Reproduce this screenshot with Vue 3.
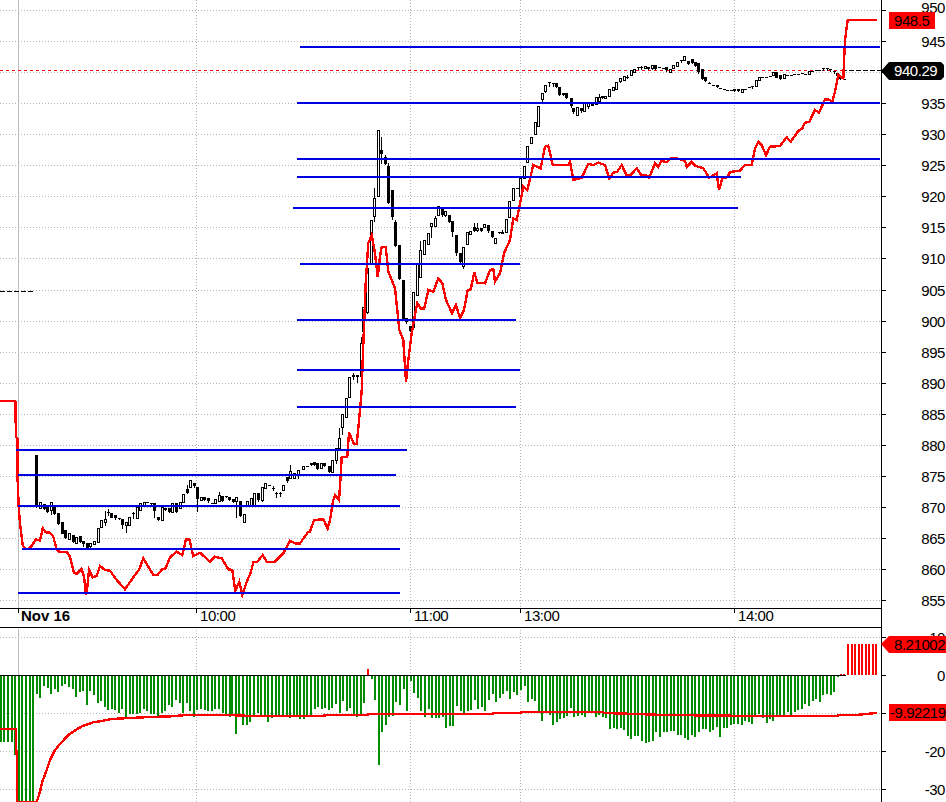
<script setup>
// points below were read off the chart in zoomed pixels, each block has its own origin
const toReal = (ox, oy, pts) => pts.map(([x, y]) => [ox + x / 3, oy + y / 3])

function parseCandles(ox, oy, str) {
  return str.split(',').map((row) => {
    const [x, kind, top, bot, wt, wb] = row.trim().split(' ')
    const t = oy + Number(top) / 3
    const b = oy + Number(bot) / 3
    return {
      x: Math.round(ox + Number(x) / 3),
      filled: kind !== 'w',
      top: Math.round(t),
      h: Math.max(1, Math.round(b - t)),
      wt: Math.round(oy + Number(wt ?? top) / 3),
      wb: Math.round(oy + Number(wb ?? bot) / 3)
    }
  })
}

const candles = [
  ...parseCandles(0, 380, `109 b 225 380, 120 w 367 385, 131 b 372 388, 142 b 380 395, 152 w 367 390 367 403, 163 b 378 403,
    174 b 400 432, 185 b 425 460, 196 b 450 475, 207 w 460 478, 218 b 465 485, 228 w 470 488, 239 b 468 485,
    250 b 482 490 482 497, 261 b 488 502, 271 w 490 500, 282 w 482 492, 293 w 443 485, 304 w 420 440,
    315 w 418 428 392 435, 323 b 395 398 388 405, 334 b 398 412, 345 b 406 416, 356 b 415 418, 367 b 416 435 416 445,
    378 w 425 435 425 455, 388 w 412 435, 399 d 398 400 395 415, 410 w 382 415, 420 w 368 390, 431 w 365 375,
    442 d 367 367, 452 b 368 372, 463 b 370 395 370 410, 474 b 410 420, 485 w 380 418, 496 b 383 390, 507 b 385 397,
    517 w 370 397, 528 b 368 396, 539 w 367 385, 549 w 343 367, 560 b 328 340 315 340, 570 w 300 320, 581 b 310 320,
    592 b 320 355 320 392, 603 w 350 360, 613 b 350 360, 624 b 355 365, 635 d 368 368, 645 w 358 370,
    656 w 345 362 335 362, 667 b 348 362, 678 b 348 352, 688 b 350 360, 699 b 356 366, 709 w 350 362 350 412,
    720 b 362 408, 731 w 402 425, 742 w 362 378, 752 w 355 375, 763 w 340 375, 774 b 340 362, 785 w 322 362,
    796 w 310 325, 807 d 315 315, 818 b 325 327 318 330, 829 b 340 342 335 350, 839 d 340 340 335 348, 850 w 316 330,
    860 b 292 305, 871 w 272 292 255 292, 882 w 278 292, 895 w 270 285 270 295, 910 w 258 268, 921 d 257 257,
    932 w 250 254, 943 b 245 255`),
  ...parseCandles(280, 360, `112 b 308 326, 124 w 308 322, 133 b 310 318, 146 b 318 335, 155 w 300 337,
    167 w 265 302 265 308, 178 w 235 266 205 266, 187 w 162 200 162 222, 199 w 115 172, 208 w 52 112`),
  ...parseCandles(320, 120, `100 b 765 772 760 778, 110 b 765 772 765 785, 122 w 670 770 652 770, 130 w 562 635, 142 w 445 578,
    154 w 300 428, 163 w 235 290 205 302, 175 w 30 228, 184 b 90 102 50 130, 196 b 112 132 105 132, 205 b 138 248 130 248,
    217 b 210 290 210 298, 226 b 305 378 300 378, 238 b 375 476, 250 b 480 597, 259 b 595 608, 271 b 618 632,
    280 w 515 620, 292 w 432 524, 301 w 390 470 362 470, 313 w 360 402, 325 w 340 372, 334 w 310 320 310 352,
    346 w 295 318 288 318, 355 w 258 285, 367 b 268 287, 376 w 274 287, 388 b 285 305, 397 b 303 335 303 347,
    409 b 345 400 345 405, 421 b 400 428, 430 w 382 438 382 443, 442 w 335 370, 451 w 333 341, 463 b 322 333 310 333,
    472 w 325 332 308 332, 484 b 324 332, 493 w 312 320, 505 b 316 335, 517 b 333 352, 526 w 355 370, 537 b 336 340,
    547 b 335 340 330 340, 559 w 298 337, 568 w 243 290, 580 w 203 238, 590 d 205 205`),
  ...parseCandles(520, 0, `0 w 535 590, 13 w 498 535, 22 w 438 485, 33 w 412 430, 44 w 367 403, 55 w 318 377, 65 w 280 298 280 303,
    76 w 256 275, 87 d 245 245 245 258, 98 d 250 250 250 258, 109 b 250 262, 118 b 262 285, 129 b 279 285, 139 b 280 295,
    152 b 295 320, 160 b 325 338, 172 w 320 344, 183 b 325 335, 193 w 310 333, 205 w 305 316 305 323, 215 b 305 316,
    227 w 292 312, 236 w 292 303 283 303, 247 b 288 294, 256 w 288 295, 268 w 267 288, 279 w 260 270, 289 w 247 268,
    300 w 235 245, 311 w 228 240, 322 d 230 230 226 234, 332 w 211 225, 343 w 208 217, 353 d 201 201 201 208, 364 d 202 202 198 206,
    376 w 197 204, 385 b 200 207, 396 w 196 206, 406 b 196 207, 417 d 202 202, 428 d 204 204, 439 b 202 212, 451 w 206 215,
    460 w 195 205, 472 w 186 198, 482 b 181 185, 493 w 169 181, 504 b 184 192, 515 b 178 190, 525 b 186 197, 535 b 190 218,
    546 b 208 238, 556 b 232 244, 568 d 250 250 245 250, 579 d 254 254, 590 b 256 262, 600 d 263 263, 612 d 267 267, 622 d 269 269,
    633 d 270 270, 643 b 267 272, 655 b 268 274, 665 w 268 276, 676 d 266 266, 688 d 262 262, 697 b 259 263, 707 w 240 257,
    716 w 232 241, 727 d 232 232, 738 d 231 231, 749 d 228 228, 760 w 215 225, 769 b 215 232, 780 b 225 236, 791 w 222 235,
    800 d 226 226, 812 d 224 224, 822 d 223 223, 833 d 222 222, 845 d 218 218, 855 d 222 222, 866 w 214 222, 875 d 213 213,
    887 d 211 211, 898 d 210 210, 910 b 205 209, 920 b 205 209, 931 d 208 208 208 212, 942 d 214 214 214 220, 952 b 220 228,
    960 b 232 237, 971 d 236 236`)
]

// main red line
const line = [
  ...toReal(0, 380, [[0,62],[46,62],[48,170],[52,175],[52,275],[56,380],[60,430],[65,470],[68,495],[75,507],[85,507],[95,497],[108,478],[120,482],[128,445],[137,457],[150,458],[160,470],[170,510],[180,517],[200,516],[210,530],[222,578],[230,582],[245,567],[252,590],[258,645],[262,620],[267,570],[278,592],[290,588],[300,558],[315,570],[330,572],[350,600],[375,628],[400,592],[418,568],[430,535],[445,560],[460,584],[473,584],[487,567],[497,565],[510,532],[530,515],[547,525],[558,478],[568,478],[580,528],[600,518],[630,545],[645,530],[665,535],[685,568],[697,570],[706,632],[718,605],[727,645],[740,605],[752,578],[760,547],[772,545],[788,525],[800,545],[825,545],[850,520],[870,483],[885,490],[900,490],[925,455],[930,455],[942,420]]),
  ...toReal(280, 360, [[103,480],[130,478],[143,505],[150,480],[160,420],[165,405],[177,420],[180,380],[185,290],[202,290],[207,218],[217,240],[222,252],[230,252],[235,205],[240,150],[245,90],[248,0]]),
  ...toReal(320, 120, [[137,490],[145,370],[155,345],[165,400],[173,470],[180,410],[185,380],[197,380],[205,455],[225,505],[235,600],[238,630],[250,660],[258,785],[265,720],[275,640],[285,585],[292,550],[302,565],[313,565],[325,510],[340,515],[355,475],[367,490],[378,540],[396,580],[408,555],[420,595],[432,570],[443,510],[452,508],[463,457],[472,488],[495,490],[510,450],[520,447],[525,485],[540,460],[552,400],[570,360],[580,295],[590,300],[610,200],[622,210],[640,135],[662,145],[675,80],[685,77],[698,135]]),
  ...toReal(520, 0, [[145,495],[150,485],[160,540],[185,533],[205,492],[220,495],[235,488],[255,495],[268,535],[280,518],[292,515],[305,495],[320,527],[332,525],[350,505],[365,527],[378,525],[388,533],[405,490],[415,500],[425,482],[440,487],[452,476],[470,475],[495,482],[500,500],[515,485],[525,497],[550,505],[568,533],[590,520],[597,570],[607,535],[622,532],[630,516],[660,512],[675,495],[695,495],[705,445],[715,425],[725,435],[738,465],[750,440],[780,438],[800,412],[812,425],[835,393],[847,385],[855,368],[868,365],[885,330],[897,338],[915,298],[925,298],[937,305],[945,275],[955,225],[970,235],[975,120],[983,60],[1070,60]])
]
const linePoints = line.map(([x, y]) => `${x.toFixed(1)},${y.toFixed(1)}`).join(' ')

// moving average in the lower panel
const avg = [
  ...toReal(0, 600, [[0,386],[47,386],[47,425],[50,465],[52,606],[110,606],[120,575],[127,545],[140,510],[150,480],[165,450],[180,432],[205,405],[230,388],[250,377],[280,367],[300,364],[335,357],[390,354],[450,351],[515,349],[560,345],[680,345],[760,348],[960,348]]),
  ...toReal(320, 600, [[27,345],[143,345],[143,342],[252,342],[518,342],[520,339],[602,339],[603,336],[850,336],[852,339]]),
  ...toReal(626, 600, [[30,342],[115,345],[400,348],[635,348],[637,345],[690,345],[720,342],[752,339]])
]
const avgPoints = avg.map(([x, y]) => `${x.toFixed(1)},${y.toFixed(1)}`).join(' ')

// histogram, x:bottom in zoomed pixels
function parseBars(ox, str) {
  return str.trim().split(/\s+/).map((item) => {
    const [x, y] = item.split(':').map(Number)
    return { x: Math.round(ox + x / 3), y: Math.round(600 + y / 3) }
  })
}
const ZERO = 675
const bars = [
  ...parseBars(0, `2:425 13:425 24:425 35:425 46:465 57:606 67:606 78:606 89:606 100:606 110:282 121:293 132:258 143:263 153:282 164:268 175:275 186:258 196:252 207:262 218:266 228:291 239:275 250:272 261:315 271:272 282:285 293:308 304:303 315:320 325:330 336:328 346:330 357:338 367:328 378:350 389:342 399:342 410:342 420:338 431:326 442:332 452:342 463:342 474:352 485:338 496:332 507:316 517:320 528:300 539:308 549:338 560:308 571:332 582:352 592:330 603:326 614:330 625:332 635:333 646:328 657:328 668:340 678:345 689:350 697:342 707:402 717:345 728:375 740:375 751:365 762:350 773:338 784:350 795:352 805:365 816:355 827:345 838:350 849:345 860:345 870:355 881:350 892:345 900:358 912:356 922:350 932:350 945:326 955:320`),
  ...parseBars(320, `5:326 16:323 27:330 36:323 47:311 60:338 69:302 81:332 90:323 101:346 111:350 122:345 131:308 143:207 155:236 165:300 176:494 187:395 198:374 208:350 219:347 228:305 240:314 251:266 261:332 272:243 282:278 294:293 304:332 315:350 326:326 337:353 348:353 357:353 368:350 379:383 390:377 399:377 411:317 422:332 432:340 443:332 452:329 464:299 474:326 486:322 495:332 506:299 518:282 528:305 540:293 549:281 560:272 570:296 582:275 591:284 603:269 614:258 624:305 635:296 645:302 656:335 666:362 678:335 689:344 699:374 711:365 720:356 731:353 741:347 753:323 762:350 774:347 785:344 795:350 806:335 817:335 828:350 838:344 849:350 858:353 870:386 882:383 892:386 902:383 912:389 923:407 933:416 944:407 954:407`),
  ...parseBars(626, `48:422 60:428 70:425 81:422 91:395 102:410 113:395 123:395 134:392 145:392 156:404 165:404 176:413 186:419 197:404 207:410 218:395 230:386 239:386 251:395 262:389 272:380 282:410 293:383 303:383 314:374 325:371 336:371 347:374 358:362 368:365 378:371 388:345 398:341 410:353 422:368 432:356 442:362 452:345 463:350 474:347 485:335 496:347 506:335 517:329 527:326 538:311 549:317 560:302 570:296 582:305 592:284 603:281 614:284 624:275 635:232 645:222 655:222 666:133 677:133 688:133 698:133 709:133 720:133 730:133 741:133 751:133`)
].map((b) => ({
  x: b.x,
  y: Math.min(b.y, ZERO),
  h: Math.max(1, Math.abs(b.y - ZERO)),
  up: b.y < ZERO
}))

const levels = [
  { y: 47, x1: 300, x2: 880 },
  { y: 103, x1: 297, x2: 880 },
  { y: 159, x1: 297, x2: 880 },
  { y: 177, x1: 297, x2: 741 },
  { y: 208, x1: 293, x2: 738 },
  { y: 264, x1: 300, x2: 520 },
  { y: 320, x1: 297, x2: 516 },
  { y: 370, x1: 297, x2: 520 },
  { y: 407, x1: 297, x2: 516 },
  { y: 450, x1: 16, x2: 407 },
  { y: 475, x1: 18, x2: 396 },
  { y: 506, x1: 18, x2: 400 },
  { y: 549, x1: 22, x2: 400 },
  { y: 593, x1: 18, x2: 400 }
]

const priceTicks = []
for (let p = 855; p <= 950; p += 5) {
  priceTicks.push({ label: p, y: Math.round(600 - (p - 855) * 6.21) + 0.5 })
}
const lowerTicks = [
  { label: '10', y: 637.5 },
  { label: '0', y: 675.5 },
  { label: '-10', y: 713.5 },
  { label: '-20', y: 751.5 },
  { label: '-30', y: 789.5 }
]
const timeTicks = [
  { x: 196.5, label: '10:00' },
  { x: 410.5, label: '11:00' },
  { x: 520.5, label: '13:00' },
  { x: 734.5, label: '14:00' }
]

// these two sit fully under a value tag in the chart
const hiddenLabels = [940, '-10']
</script>

<template>
  <div class="chart">
    <svg width="946" height="802" viewBox="0 0 946 802">
      <!-- grid -->
      <g class="grid">
        <line v-for="t in priceTicks" :key="t.label" x1="0" x2="881" :y1="t.y" :y2="t.y" />
        <line v-for="t in lowerTicks.filter((l) => l.label !== '0')" :key="t.label" x1="0" x2="881" :y1="t.y" :y2="t.y" />
        <template v-for="t in timeTicks" :key="t.label">
          <line :x1="t.x" :x2="t.x" y1="0" y2="608" />
          <line :x1="t.x" :x2="t.x" y1="627" y2="802" />
        </template>
      </g>
      <line class="session" x1="18.5" x2="18.5" y1="0" y2="608" />
      <line class="session" x1="18.5" x2="18.5" y1="629" y2="802" />

      <!-- price panel -->
      <line class="prev-close" x1="0" x2="33" y1="291.5" y2="291.5" />
      <line class="last-red" x1="0" x2="842" y1="70.5" y2="70.5" />
      <line class="prev-close" x1="842" x2="881" y1="70.5" y2="70.5" />
      <g v-for="(c, i) in candles" :key="i" shape-rendering="crispEdges">
        <line class="wick" :x1="c.x + 0.5" :x2="c.x + 0.5" :y1="c.wt" :y2="c.wb + 1" />
        <rect v-if="c.filled" class="body-black" :x="c.x - 1" :y="c.top" width="3" :height="c.h" />
        <rect v-else class="body-white" :x="c.x - 0.5" :y="c.top + 0.5" width="2" :height="c.h" />
      </g>
      <polyline class="red-line" :points="linePoints" />
      <line v-for="l in levels" :key="l.y" class="level" :x1="l.x1" :x2="l.x2" :y1="l.y" :y2="l.y" />

      <!-- time strip -->
      <line class="frame" x1="0" x2="881" y1="608.5" y2="608.5" />
      <line class="frame" x1="0" x2="881" y1="627.5" y2="627.5" />
      <line class="frame" x1="18.5" x2="18.5" y1="608" y2="613" />
      <text class="label bold" x="21" y="621">Nov 16</text>
      <template v-for="t in timeTicks" :key="t.label">
        <line class="frame" :x1="t.x" :x2="t.x" y1="608" y2="613" />
        <text class="label" :x="t.x + 3.5" y="621">{{ t.label }}</text>
      </template>

      <!-- lower panel -->
      <g shape-rendering="crispEdges">
        <rect v-for="(b, i) in bars" :key="i" :class="b.up ? 'bar-up' : 'bar-down'" :x="b.x - 1" :y="b.y" width="2" :height="b.h" />
      </g>
      <line class="frame" x1="0" x2="846" y1="675.5" y2="675.5" />
      <polyline class="red-line" :points="avgPoints" />

      <!-- right axis -->
      <line class="frame" x1="881.5" x2="881.5" y1="0" y2="802" />
      <g v-for="t in priceTicks" :key="t.label">
        <line class="frame" x1="881" x2="886" :y1="t.y" :y2="t.y" />
        <text v-if="!hiddenLabels.includes(t.label)" class="label" x="945" :y="t.label === 950 ? 13 : t.y + 5" text-anchor="end">{{ t.label }}</text>
      </g>
      <g v-for="t in lowerTicks" :key="t.label">
        <line class="frame" x1="881" x2="886" :y1="t.y" :y2="t.y" />
        <text v-if="!hiddenLabels.includes(t.label)" class="label" x="945" :y="t.y + 5" text-anchor="end">{{ t.label }}</text>
      </g>

      <!-- value tags -->
      <rect class="tag-red" x="889" y="12" width="46" height="17" />
      <text class="label" x="894" y="26">948.5</text>
      <polygon class="tag-black" points="881,71 889,62 941,62 944,65 944,77 941,80 889,80" />
      <text class="label light" x="894" y="76">940.29</text>
      <polygon class="tag-red" points="881,644 889,636 946,636 946,653 889,653" />
      <text class="label" x="894" y="650">8.21002</text>
      <rect class="tag-red" x="889" y="704" width="57" height="17" />
      <text class="label" x="890" y="718">-9.92219</text>
    </svg>
  </div>
</template>

<style scoped>
.chart {
  width: 946px;
  height: 802px;
  overflow: hidden;
  background: #fff;
}

svg {
  display: block;
}

.grid line {
  stroke: #b4b4b4;
  stroke-width: 1;
  stroke-dasharray: 1 2;
  shape-rendering: crispEdges;
}

.session {
  stroke: #bdbdbd;
  stroke-width: 1;
  shape-rendering: crispEdges;
}

.frame {
  stroke: #000;
  stroke-width: 1;
  shape-rendering: crispEdges;
}

.prev-close {
  stroke: #000;
  stroke-dasharray: 5 2;
  shape-rendering: crispEdges;
}

.last-red {
  stroke: #f00;
  stroke-dasharray: 3 3;
  shape-rendering: crispEdges;
}

.wick {
  stroke: #000;
  stroke-width: 1;
}

.body-black {
  fill: #000;
}

.body-white {
  fill: #fff;
  stroke: #000;
  stroke-width: 1;
}

.red-line {
  fill: none;
  stroke: #f00;
  stroke-width: 2.4;
  shape-rendering: crispEdges;
}

.level {
  stroke: #0000e0;
  stroke-width: 2;
  shape-rendering: crispEdges;
}

.bar-down {
  fill: #008c00;
}

.bar-up {
  fill: #f00;
}

.label {
  font-family: "Liberation Sans", Arial, sans-serif;
  font-size: 15px;
  letter-spacing: -0.45px;
  fill: #000;
}

.bold {
  font-weight: 700;
  letter-spacing: 0;
}

.light {
  fill: #fff;
}

.tag-red {
  fill: #f00;
}

.tag-black {
  fill: #000;
}
</style>
